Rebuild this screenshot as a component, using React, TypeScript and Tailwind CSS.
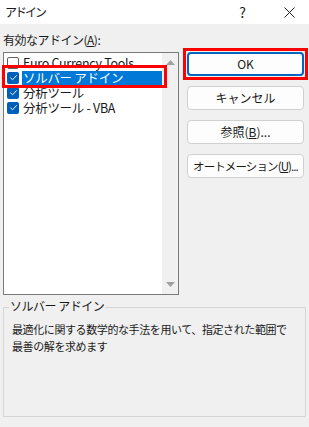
import React from 'react';

const FONT = { fontFamily: '"Noto Sans CJK JP", "Noto Sans", sans-serif' };

interface AddinItem {
  name: string;
  checked: boolean;
}

const ADDINS: AddinItem[] = [
  { name: 'Euro Currency Tools', checked: false },
  { name: 'ソルバー アドイン', checked: true },
  { name: '分析ツール', checked: true },
  { name: '分析ツール - VBA', checked: true },
];

function CheckBox({ checked }: { checked: boolean }) {
  if (!checked) {
    return <span className="w-[12px] h-[12px] rounded-[2px] border border-[#5f5f5f] bg-white shrink-0" />;
  }
  return (
    <span className="w-[12px] h-[12px] rounded-[2px] bg-[#005fb8] shrink-0 flex items-center justify-center">
      <svg width="9" height="9" viewBox="0 0 10 10">
        <path d="M1.5 5.2 L4 7.5 L8.6 2.6" fill="none" stroke="white" strokeWidth="1.1" />
      </svg>
    </span>
  );
}

function DialogButton({ label, focused }: { label: React.ReactNode; focused?: boolean }) {
  return (
    <button
      className={`h-[24px] w-[117px] rounded-[4px] bg-[#fdfdfd] text-[12px] leading-[16px] text-[#1a1a1a] flex items-center justify-center whitespace-nowrap ${
        focused ? 'border-2 border-[#0067c0]' : 'border border-[#d0d0d0]'
      }`}
    >
      {label}
    </button>
  );
}

export default function App() {
  return (
    <div className="w-[309px] h-[427px] bg-[#f0f0f0] text-[#1a1a1a] overflow-hidden" style={FONT}>
      {/* Title bar */}
      <div className="h-[24px] bg-white flex items-center pl-[5px] pr-[14px] text-[12px]">
        <span className="tracking-[-2px]">アドイン</span>
        <span className="ml-auto text-[14px] mr-[38px]">?</span>
        <svg width="11" height="11" viewBox="0 0 11 11">
          <path d="M0.5 0.5 L10.5 10.5 M10.5 0.5 L0.5 10.5" stroke="#222" strokeWidth="1" />
        </svg>
      </div>

      <div className="flex pl-[3px] pt-[8px]">
        {/* Left column */}
        <div className="w-[176px]">
          <div className="text-[12px] leading-[16px] h-[20px] tracking-[-0.5px]">
            有効なアドイン(<span className="underline">A</span>):
          </div>
          <div className="relative h-[243px] border border-[#7a7a7a] bg-white flex">
            <div className="flex-1 pt-[2px] pl-[3px]">
              {ADDINS.map((item, i) => (
                <div key={item.name} className="h-[15px] flex items-center gap-[3px] text-[12.5px] leading-[14px]">
                  <CheckBox checked={item.checked} />
                  <span
                    className={`h-[14px] leading-[14px] pl-[1px] flex-1 tracking-[-0.3px] whitespace-nowrap ${
                      i === 1 ? 'bg-[#0078d7] text-white' : ''
                    }`}
                  >
                    {item.name}
                  </span>
                </div>
              ))}
            </div>
            <div className="w-[16px] bg-[#f0f0f0] flex flex-col items-center justify-between py-[7px]">
              <svg width="9" height="5" viewBox="0 0 9 5">
                <path d="M0 5 L4.5 0 L9 5 Z" fill="#a0a0a0" />
              </svg>
              <svg width="9" height="5" viewBox="0 0 9 5">
                <path d="M0 0 L4.5 5 L9 0 Z" fill="#a0a0a0" />
              </svg>
            </div>
            {/* red highlight on selected item */}
            <div className="absolute left-[-2px] top-[12px] w-[165px] h-[23px] border-[3px] border-[#ff0000]" />
          </div>
        </div>

        {/* Right column */}
        <div className="ml-[8px] flex flex-col gap-[10px] pt-[20px]">
          <div className="relative">
            <DialogButton label="OK" focused />
            <div className="absolute -left-[4px] -top-[4px] -right-[4px] -bottom-[4px] border-[3px] border-[#ff0000]" />
          </div>
          <DialogButton label="キャンセル" />
          <DialogButton
            label={
              <>
                参照(<span className="underline">B</span>)...
              </>
            }
          />
          <DialogButton
            label={
              <span className="text-[11.5px] tracking-[-0.9px]">
                オートメーション(<span className="underline">U</span>)...
              </span>
            }
          />
        </div>
      </div>

      {/* Description group */}
      <div className="relative mx-[3px] mt-[12px] h-[110px] border border-[#d5d5d5]">
        <span className="absolute left-[5px] -top-[10px] bg-[#f0f0f0] text-[12px] leading-[16px] px-[1px] tracking-[-0.5px]">
          ソルバー アドイン
        </span>
        <p className="pt-[13px] pl-[8px] pr-[2px] text-[11px] leading-[17px] tracking-[-0.4px] whitespace-nowrap">
          最適化に関する数学的な手法を用いて、指定された範囲で
          <br />
          最善の解を求めます
        </p>
      </div>
    </div>
  );
}
